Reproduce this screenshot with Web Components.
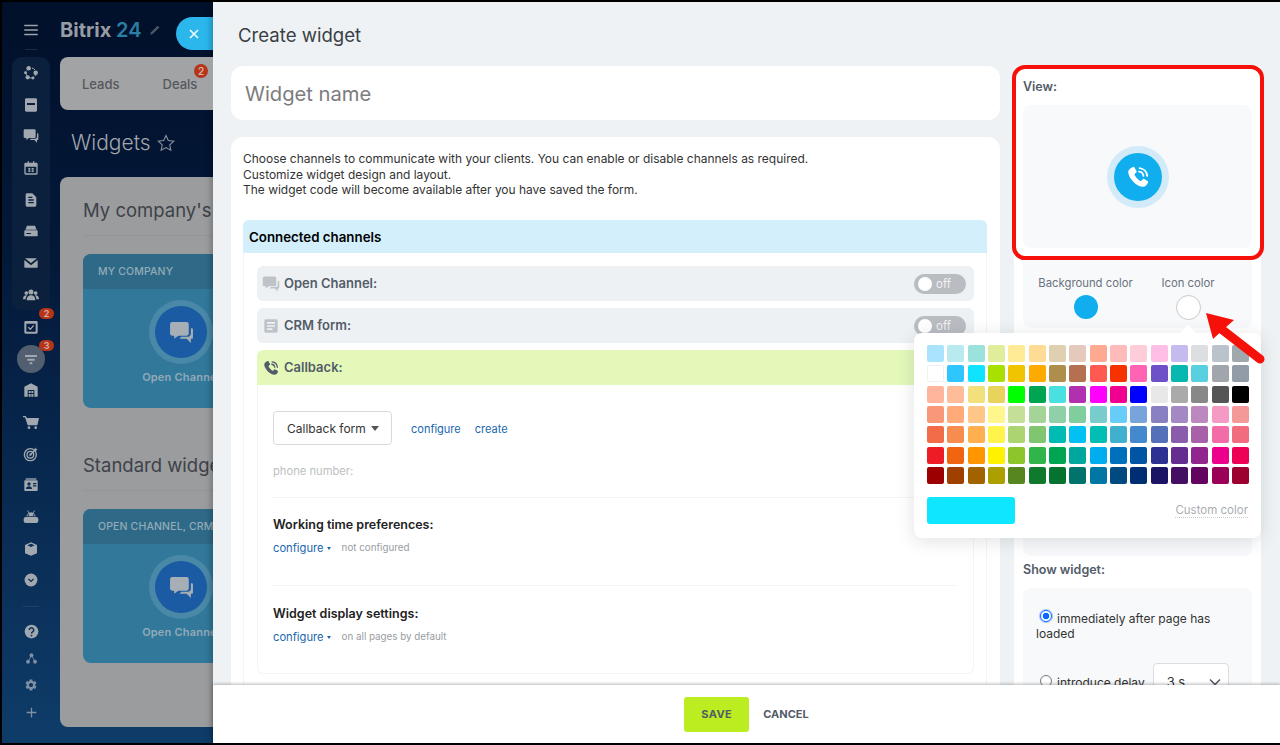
<!DOCTYPE html>
<html lang="en">
<head>
<meta charset="utf-8">
<title>Create widget</title>
<style>
    html, body { margin: 0; background: #000; }
    body { font-family: Inter, "Liberation Sans", sans-serif; }
</style>
</head>
<body>
<bx-app></bx-app>
<script>
const ICONS = {
    menu: '<path d="M3 5h18v2H3zM3 11h18v2H3zM3 17h18v2H3z"/>',
    sites: '<circle cx="12" cy="12" r="7.5" fill="none" stroke="currentColor" stroke-width="1.5" stroke-dasharray="5 4"/><circle cx="8.5" cy="5" r="3.4"/><circle cx="19" cy="11.5" r="3.4"/><circle cx="7" cy="18.5" r="3.2"/><circle cx="15" cy="19.5" r="2.2"/><circle cx="3.8" cy="11.5" r="2.2"/>',
    card: '<path fill-rule="evenodd" d="M5 2h14a2 2 0 0 1 2 2v16a2 2 0 0 1-2 2H5a2 2 0 0 1-2-2V4a2 2 0 0 1 2-2zm1 7v3h12V9z"/>',
    chat: '<path d="M3 2h14a2 2 0 0 1 2 2v9a2 2 0 0 1-2 2H9l-4 3v-3H3a2 2 0 0 1-2-2V4a2 2 0 0 1 2-2z"/><path d="M21 8h1a1 1 0 0 1 1 1v8a1 1 0 0 1-1 1h-1v4l-4-4h-7l2-2h6a3 3 0 0 0 3-3z"/>',
    calendar: '<path fill-rule="evenodd" d="M4 4h3V2h2v2h6V2h2v2h3a2 2 0 0 1 2 2v14a2 2 0 0 1-2 2H4a2 2 0 0 1-2-2V6a2 2 0 0 1 2-2zm0 6v10h16V10zm4 2h3v2.5H8zm5 0h3v2.5h-3zm-5 3.5h3V18H8zm5 0h3V18h-3z"/>',
    doc: '<path fill-rule="evenodd" d="M6 2h8l6 6v12a2 2 0 0 1-2 2H6a2 2 0 0 1-2-2V4a2 2 0 0 1 2-2zm2 5v2h6V7zm0 4v2h8v-2zm0 4v2h8v-2z"/>',
    form: '<path fill-rule="evenodd" d="M4 2h16a2 2 0 0 1 2 2v16a2 2 0 0 1-2 2H4a2 2 0 0 1-2-2V4a2 2 0 0 1 2-2zm2 4v2.500h12V6zm0 4.800v2.400h12v-2.400zm0 4.700V18h8v-2.500z"/>',
    drive: '<path fill-rule="evenodd" d="M6 4h12l2.5 6h-17zM3 11h18a1 1 0 0 1 1 1v7a1 1 0 0 1-1 1H3a1 1 0 0 1-1-1v-7a1 1 0 0 1 1-1zm2 4v1.6h7V15z"/>',
    mail: '<path d="M3 5h18l-9 7zM2 7.500l10 8 10-8V18a1 1 0 0 1-1 1H3a1 1 0 0 1-1-1z"/>',
    people: '<circle cx="12" cy="7.500" r="3.800"/><circle cx="5" cy="9" r="2.800"/><circle cx="19" cy="9" r="2.800"/><path d="M5.500 20c0-5 2.500-7.500 6.500-7.500s6.500 2.500 6.500 7.500zM0 18.500c0-4 1.800-6 5-6 .6 0 1 .1 1.400.3C4.500 14.300 4 16.500 4 18.500zM24 18.500c0-4-1.800-6-5-6-.6 0-1 .1-1.400.3 1.900 1.500 2.400 3.700 2.400 5.700z"/>',
    task: '<path fill-rule="evenodd" d="M4 3h16a2 2 0 0 1 2 2v15a2 2 0 0 1-2 2H4a2 2 0 0 1-2-2V5a2 2 0 0 1 2-2zm1 4v12h14V7z"/><path d="M8 12.500l3 3 5-6" fill="none" stroke="currentColor" stroke-width="2"/>',
    funnel: '<path d="M3 6h18v3H3zM6.500 11.500h11v3h-11zM10 17h4v3h-4z"/>',
    store: '<path fill-rule="evenodd" d="M12 2l10 5v15h-5V12H7v10H2V7z"/><path d="M8.500 13.500h3v3h-3zM12.500 13.500h3v3h-3zM8.500 18h3v4h-3zM12.500 18h3v4h-3z"/>',
    cart: '<path d="M0 3h4l2 3h18l-2.500 11H7L3 5H0z"/><circle cx="9" cy="20.500" r="2"/><circle cx="19" cy="20.500" r="2"/>',
    target: '<circle cx="11" cy="13" r="9" fill="none" stroke="currentColor" stroke-width="2"/><circle cx="11" cy="13" r="5" fill="none" stroke="currentColor" stroke-width="2"/><circle cx="11" cy="13" r="1.800"/><path d="M11 13L20 4" stroke="currentColor" stroke-width="2"/><path d="M18 2l1 2.500L22 5l-2.500 2.500L17 6z"/>',
    contact: '<path d="M4 2h16v2H4z"/><path fill-rule="evenodd" d="M3 5h18a1 1 0 0 1 1 1v14a1 1 0 0 1-1 1H3a1 1 0 0 1-1-1V6a1 1 0 0 1 1-1zm6 3a2.500 2.500 0 1 0 0 5 2.500 2.500 0 0 0 0-5zm-4.500 10h9c0-2.500-2-4-4.500-4s-4.500 1.500-4.500 4zM15 9v1.800h5V9zm0 3.500v1.800h5v-1.800z"/>',
    robot: '<path d="M7 2l2.500 3.500a7 7 0 0 1 5 0L17 2l.8.6-2.200 3.400A7 7 0 0 1 19 11H5a7 7 0 0 1 3.400-5L6.200 2.600z"/><path fill-rule="evenodd" d="M4 12h16a3 3 0 0 1 3 3v3a3 3 0 0 1-3 3H4a3 3 0 0 1-3-3v-3a3 3 0 0 1 3-3z"/><circle cx="8" cy="9" r="1.300" fill="var(--icon-cut, #0a2b4f)"/><circle cx="16" cy="9" r="1.300" fill="var(--icon-cut, #0a2b4f)"/>',
    cube: '<path fill-rule="evenodd" d="M12 2l9 4v12.500L12 22l-9-3.500V6zm0 2.200L6.500 6.500 12 9l5.500-2.500z"/>',
    chevron: '<circle cx="12" cy="12" r="11"/><path d="M7.500 10l4.500 4.500 4.500-4.500" fill="none" stroke="var(--icon-cut, #0a2b4f)" stroke-width="2.200"/>',
    question: '<circle cx="12" cy="12" r="11"/><path d="M8.500 9.500a3.500 3.500 0 1 1 5.300 3c-1.300.8-1.800 1.400-1.800 2.700" fill="none" stroke="var(--icon-cut, #0c3157)" stroke-width="2.400"/><circle cx="12" cy="18.500" r="1.500" fill="var(--icon-cut, #0c3157)"/>',
    nodes: '<circle cx="12" cy="6" r="3.500"/><circle cx="5.500" cy="18" r="3.500"/><circle cx="18.500" cy="18" r="3.500"/><path d="M12 6L5.500 18M12 6l6.500 12" stroke="currentColor" stroke-width="1.500"/>',
    gear: '<path d="M19.140 12.940c.04-.3.06-.61.06-.94 0-.32-.02-.64-.07-.94l2.030-1.580c.18-.14.23-.41.12-.61l-1.920-3.320c-.12-.22-.37-.29-.59-.22l-2.390.96c-.5-.38-1.030-.7-1.620-.94l-.36-2.540c-.04-.24-.24-.41-.48-.41h-3.840c-.24 0-.43.17-.47.41l-.36 2.540c-.59.24-1.130.57-1.620.94l-2.390-.96c-.22-.08-.47 0-.59.22L2.740 8.870c-.12.21-.08.47.12.61l2.030 1.580c-.05.3-.09.63-.09.94s.02.64.07.94l-2.030 1.580c-.18.14-.23.41-.12.61l1.920 3.320c.12.22.37.29.59.22l2.390-.96c.5.38 1.030.7 1.620.94l.36 2.540c.05.24.24.41.48.41h3.840c.24 0 .44-.17.47-.41l.36-2.540c.59-.24 1.130-.56 1.620-.94l2.390.96c.22.08.47 0 .59-.22l1.920-3.320c.12-.22.07-.47-.12-.61l-2.010-1.580zM12 15.600c-1.980 0-3.600-1.620-3.600-3.600s1.620-3.600 3.600-3.600 3.600 1.620 3.600 3.600-1.620 3.600-3.600 3.600z"/>',
    plus: '<path d="M10.800 3h2.400v7.800H21v2.400h-7.800V21h-2.400v-7.800H3v-2.400h7.800z"/>',
    pencil: '<path d="M16.500 4.500l3 3L8 19l-4 1 1-4z"/>',
    star: '<path fill="none" stroke="currentColor" stroke-width="1.300" d="M12 3l2.800 6 6.500.8-4.800 4.400 1.300 6.500L12 17.500l-5.800 3.200 1.300-6.500L2.700 9.800 9.200 9z"/>',
    close: '<path d="M6 6l12 12M18 6L6 18" fill="none" stroke="currentColor" stroke-width="2.600"/>',
    phone: '<path d="M7.200 2.800c.5-.3 1.100-.2 1.400.3l2 3.300c.3.5.2 1-.2 1.400L8.900 9.200c-.2.200-.3.500-.1.800.9 1.900 3.200 4.600 5.300 5.700.3.100.6.100.8-.1l1.500-1.500c.4-.4 1-.5 1.400-.2l3 1.900c.5.300.7.900.4 1.400-.8 1.600-2.200 3.800-4.600 3.800C10.900 21 3.600 13.400 3 8 2.700 5.600 5.300 3.800 7.200 2.800z"/><path d="M13 7a4.500 4.500 0 0 1 4 4M13.500 3.800a8 8 0 0 1 7 7.200" fill="none" stroke="currentColor" stroke-width="1.700" stroke-linecap="round"/>'
};

class BxIcon extends HTMLElement {
    connectedCallback() {
        const size = this.getAttribute('size') || 16;
        this.attachShadow({ mode: 'open' }).innerHTML = `
            <style>:host { display: inline-flex; flex: none; } svg { display: block; fill: currentColor; }</style>
            <svg width="${size}" height="${size}" viewBox="0 0 24 24">${ICONS[this.getAttribute('name')]}</svg>`;
    }
}

class BxNavItem extends HTMLElement {
    connectedCallback() {
        const badge = this.getAttribute('badge');
        this.attachShadow({ mode: 'open' }).innerHTML = `
            <style>
                :host { display: flex; position: relative; height: 31.7px; align-items: center; justify-content: center; color: #a2a8b0; }
                :host([short]) { height: 27px; }
                :host([dim]) { color: #7f90a4; }
                :host([active]) .disc { background: #525f70; }
                .disc { width: 28px; height: 28px; border-radius: 50%; display: flex; align-items: center; justify-content: center; }
                .badge { position: absolute; left: 27px; top: -3px; width: 15px; height: 11px; border-radius: 6px; background: #b5341a; color: #d9b3a9; font: 600 9px/11px Inter, sans-serif; text-align: center; }
            </style>
            <div class="disc"><bx-icon name="${this.getAttribute('icon')}" size="${this.getAttribute('size') || 16}"></bx-icon></div>
            ${badge ? `<span class="badge">${badge}</span>` : ''}`;
    }
}

class BxSidebar extends HTMLElement {
    connectedCallback() {
        this.attachShadow({ mode: 'open' }).innerHTML = `
            <style>
                :host { display: block; width: 58px; flex: none; }
                .burger { height: 55px; display: flex; flex-direction: column; align-items: center; color: #9ea3aa; }
                .burger bx-icon { margin-top: 19px; }
                .burger i { display: block; width: 12px; height: 1px; margin-top: 10px; background: #1a2b44; }
                .rail { width: 38px; height: 253px; margin: 0 10px 1px; border-radius: 10px; background: #0b203c; }
                .rest { margin: 0 10px; width: 38px; }
                hr { width: 16px; height: 1px; border: 0; margin: 10px auto 10.5px; background: #1c4268; }
            </style>
            <div class="burger"><bx-icon name="menu" size="18"></bx-icon><i></i></div>
            <div class="rail">
                <bx-nav-item icon="sites"></bx-nav-item>
                <bx-nav-item icon="card"></bx-nav-item>
                <bx-nav-item icon="chat"></bx-nav-item>
                <bx-nav-item icon="calendar"></bx-nav-item>
                <bx-nav-item icon="doc"></bx-nav-item>
                <bx-nav-item icon="drive"></bx-nav-item>
                <bx-nav-item icon="mail"></bx-nav-item>
                <bx-nav-item icon="people"></bx-nav-item>
            </div>
            <div class="rest">
                <bx-nav-item icon="task" badge="2"></bx-nav-item>
                <bx-nav-item icon="funnel" badge="3" active></bx-nav-item>
                <bx-nav-item icon="store"></bx-nav-item>
                <bx-nav-item icon="cart"></bx-nav-item>
                <bx-nav-item icon="target"></bx-nav-item>
                <bx-nav-item icon="contact"></bx-nav-item>
                <bx-nav-item icon="robot"></bx-nav-item>
                <bx-nav-item icon="cube"></bx-nav-item>
                <bx-nav-item icon="chevron" size="14"></bx-nav-item>
                <hr>
                <bx-nav-item icon="question" size="15" short></bx-nav-item>
                <bx-nav-item icon="nodes" size="13" short dim></bx-nav-item>
                <bx-nav-item icon="gear" size="14" short dim></bx-nav-item>
                <bx-nav-item icon="plus" size="13" short dim></bx-nav-item>
            </div>`;
    }
}

class BxChannelTile extends HTMLElement {
    connectedCallback() {
        this.attachShadow({ mode: 'open' }).innerHTML = `
            <style>
                :host { display: block; width: 196px; height: 154px; border-radius: 8px; overflow: hidden; background: #31789b; }
                .head { height: 35px; padding-left: 15px; background: #2e6a87; color: #93aab7; font: 500 10.5px/36px Inter, sans-serif; letter-spacing: .15px; white-space: nowrap; }
                .disc { width: 52px; height: 52px; margin: 17px auto 0; border-radius: 50%; background: #1a5ba3; box-shadow: 0 0 0 6px #4a88a7; display: flex; align-items: center; justify-content: center; color: #a6aeb6; }
                .name { margin-top: 12px; text-align: center; color: #93aab7; font: 600 11px/14px Inter, sans-serif; letter-spacing: .2px; white-space: nowrap; }
            </style>
            <div class="head"><slot></slot></div>
            <div class="disc"><bx-icon name="chat" size="25"></bx-icon></div>
            <div class="name">Open Channel</div>`;
    }
}

class BxBackdrop extends HTMLElement {
    connectedCallback() {
        this.attachShadow({ mode: 'open' }).innerHTML = `
            <style>
                :host { display: flex; width: 211px; flex: none; overflow: hidden; background: linear-gradient(180deg, #01102a 0%, #03193a 35%, #0e3c69 100%); }
                .page { flex: 1; min-width: 0; white-space: nowrap; }
                .top { height: 55px; display: flex; align-items: center; }
                .logo { font: 700 20px/24px Inter, sans-serif; color: #989da4; }
                .logo b { color: #2a7da3; font-weight: 600; }
                .pen { margin-left: 6px; color: #4c5663; }
                .back { margin-left: auto; align-self: flex-end; margin-bottom: 7px; width: 37px; height: 33px; border-radius: 17px 0 0 17px; background: #2bb6ec; color: #eef9fe; display: flex; align-items: center; padding-left: 10px; box-sizing: border-box; }
                .tabs { height: 53px; border-radius: 8px 0 0 8px; background: #a2a3a5; display: flex; align-items: center; box-sizing: border-box; color: #55585e; font: 500 13px/16px Inter, sans-serif; position: relative; }
                .tabs span { margin-left: 22px; }
                .tabs span + span { margin-left: 43px; }
                .tabs i { position: absolute; left: 134px; top: 7px; width: 14px; height: 14px; border-radius: 50%; background: #b5341a; color: #d9b3a9; font: 600 10px/14px Inter, sans-serif; text-align: center; }
                .title { height: 67px; padding: 0 0 2px 11px; box-sizing: border-box; display: flex; align-items: center; gap: 5px; color: #a2a7ad; font: 300 21px/28px Inter, sans-serif; }
                .title bx-icon { color: #8d929a; }
                .sheet { height: 550px; border-radius: 8px 0 0 8px; background: #9b9c9e; padding: 21px 0 0 23px; box-sizing: border-box; }
                h2 { margin: 0; color: #3e4249; font: 400 18.5px/24px Inter, sans-serif; }
                hr { height: 1px; margin: 13px 0 18px; border: 0; background: #949597; }
                h2.second { margin-top: 45px; }
            </style>
            <bx-sidebar></bx-sidebar>
            <div class="page">
                <div class="top">
                    <span class="logo">Bitrix <b>24</b></span>
                    <bx-icon class="pen" name="pencil" size="14"></bx-icon>
                    <div class="back"><bx-icon name="close" size="16"></bx-icon></div>
                </div>
                <div class="tabs"><span>Leads</span><span>Deals</span><i>2</i></div>
                <div class="title">Widgets <bx-icon name="star" size="20"></bx-icon></div>
                <div class="sheet">
                    <h2>My company's</h2>
                    <hr>
                    <bx-channel-tile>MY COMPANY</bx-channel-tile>
                    <h2 class="second">Standard widgets</h2>
                    <hr>
                    <bx-channel-tile>OPEN CHANNEL, CRM</bx-channel-tile>
                </div>
            </div>`;
    }
}

class BxToggle extends HTMLElement {
    connectedCallback() {
        this.attachShadow({ mode: 'open' }).innerHTML = `
            <style>
                :host { display: flex; align-items: center; width: 52px; height: 20px; border-radius: 10px; background: #b9bcc1; box-sizing: border-box; padding-left: 4px; color: #f1f2f3; font: 400 11.5px/20px Inter, sans-serif; }
                i { width: 14px; height: 14px; border-radius: 50%; background: #fff; margin-right: 4px; }
            </style>
            <i></i>off`;
    }
}

class BxChannelRow extends HTMLElement {
    connectedCallback() {
        this.attachShadow({ mode: 'open' }).innerHTML = `
            <style>
                :host { display: flex; align-items: center; height: 35px; padding: 0 8px 0 5px; border-radius: 6px; background: #eef1f4; color: #535c69; font: 600 13px/15px Inter, sans-serif; }
                :host([open]) { background: #e3f8b9; border-radius: 6px 6px 0 0; }
                bx-icon { width: 18px; margin-right: 4px; color: #bfc3c8; justify-content: center; }
                :host([open]) bx-icon { color: #535c69; }
                bx-toggle { margin-left: auto; }
            </style>
            <bx-icon name="${this.getAttribute('icon')}" size="${this.getAttribute('icon-size') || 18}"></bx-icon>
            <slot></slot>
            ${this.hasAttribute('open') ? '' : '<bx-toggle></bx-toggle>'}`;
    }
}

class BxSetting extends HTMLElement {
    connectedCallback() {
        this.attachShadow({ mode: 'open' }).innerHTML = `
            <style>
                :host { display: block; }
                .name { color: #222; font: 600 12.5px/16px Inter, sans-serif; }
                .row { display: flex; align-items: center; margin-top: 8px; height: 14px; }
                a { color: #2067b0; font: 400 11.2px/14px Inter, sans-serif; }
                a::after { content: ""; display: inline-block; margin: 0 0 2px 3px; border: 2.5px solid transparent; border-top: 3px solid #2067b0; border-bottom: 0; }
                span { margin-left: 11px; color: #999ca1; font: 400 9.8px/14px Inter, sans-serif; }
            </style>
            <div class="name"><slot></slot></div>
            <div class="row"><a>configure</a><span>${this.getAttribute('note')}</span></div>`;
    }
}

class BxCallbackBody extends HTMLElement {
    connectedCallback() {
        this.attachShadow({ mode: 'open' }).innerHTML = `
            <style>
                :host { display: block; height: 289px; box-sizing: border-box; padding: 26px 16px 0 15px; border: 1px solid #f3f4f5; border-top: 0; border-radius: 0 0 6px 6px; }
                .form { display: flex; align-items: center; gap: 19px; }
                .pick { display: flex; align-items: center; width: 119px; height: 34px; box-sizing: border-box; padding: 1px 0 0 13px; border: 1px solid #d9dadc; border-radius: 4px; color: #333; font: 400 12px/16px Inter, sans-serif; }
                .pick::after { content: ""; margin-left: 5px; border: 4px solid transparent; border-top: 5px solid #555; border-bottom: 0; }
                a { color: #2067b0; font: 400 11px/14px Inter, sans-serif; padding-top: 1px; }
                .form a + a { margin-left: -5px; }
                .phone { margin-top: 19px; color: #bcbfc2; font: 400 11.2px/14px Inter, sans-serif; }
                hr { height: 1px; border: 0; background: #f2f3f4; margin: 0; }
                .one { margin-top: 19px; margin-bottom: 19px; }
                .two { margin: 30px 0 20px -2px; }
            </style>
            <div class="form"><div class="pick">Callback form</div><a>configure</a><a>create</a></div>
            <div class="phone">phone number:</div>
            <hr class="one">
            <bx-setting note="not configured">Working time preferences:</bx-setting>
            <hr class="two">
            <bx-setting note="on all pages by default">Widget display settings:</bx-setting>`;
    }
}

class BxChannelsCard extends HTMLElement {
    connectedCallback() {
        this.attachShadow({ mode: 'open' }).innerHTML = `
            <style>
                :host { display: block; border-radius: 12px 12px 0 0; background: #fff; padding: 14px 13px 0 12px; height: 560px; box-sizing: border-box; }
                p { margin: 0; color: #333; font: 400 11.97px/15.5px Inter, sans-serif; }
                h3 { margin: 22.5px 0 0; height: 33px; padding-left: 6px; border-radius: 6px 6px 0 0; background: #d2effb; color: #000; font: 600 13.3px/35px Inter, sans-serif; }
                .list { border: 1px solid #f3f4f5; border-top: 0; padding: 13px 12px 20px 13px; display: flex; flex-direction: column; }
                bx-channel-row { margin-bottom: 7px; }
                bx-channel-row[open] { margin-bottom: 0; }
            </style>
            <p>Choose channels to communicate with your clients. You can enable or disable channels as required.<br>Customize widget design and layout.<br>The widget code will become available after you have saved the form.</p>
            <h3>Connected channels</h3>
            <div class="list">
                <bx-channel-row icon="chat">Open Channel:</bx-channel-row>
                <bx-channel-row icon="form" icon-size="16">CRM form:</bx-channel-row>
                <bx-channel-row icon="phone" open>Callback:</bx-channel-row>
                <bx-callback-body></bx-callback-body>
            </div>`;
    }
}

class BxWidgetButton extends HTMLElement {
    connectedCallback() {
        this.attachShadow({ mode: 'open' }).innerHTML = `
            <style>
                :host { display: flex; align-items: center; justify-content: center; width: 48px; height: 48px; border-radius: 50%; background: #10aeef; box-shadow: 0 0 0 7px #d3ebf9; color: #fff; }
            </style>
            <bx-icon name="phone" size="26"></bx-icon>`;
    }
}

class BxViewColumn extends HTMLElement {
    connectedCallback() {
        this.attachShadow({ mode: 'open' }).innerHTML = `
            <style>
                :host { display: block; width: 247px; flex: none; box-sizing: border-box; padding: 0 9px; background: #fff; height: 700px; }
                h4 { margin: 0; padding-top: 13px; height: 39px; box-sizing: border-box; color: #535c69; font: 600 12.5px/16px Inter, sans-serif; }
                .box { border-radius: 8px; background: #f8f9fb; }
                .preview { height: 143px; display: flex; align-items: center; justify-content: center; }
                .colors { height: 72px; margin-top: 8px; display: grid; grid-template-columns: 125px 80px; text-align: center; color: #6a727d; font: 400 11.3px/15px Inter, sans-serif; padding-top: 20px; box-sizing: border-box; white-space: nowrap; }
                .colors i { display: block; width: 24px; height: 24px; margin: 4px auto 0; border-radius: 50%; background: #10aeef; box-sizing: border-box; }
                .colors div + div i { background: #fff; border: 1px solid #c9c9c9; width: 25px; height: 25px; }
                .spare { height: 220px; margin-top: 8px; }
                h4.show { padding-top: 6px; height: 32px; }
                .delay { padding: 22px 13px 0; color: #333; font: 400 12px/15px Inter, sans-serif; height: 150px; box-sizing: border-box; }
                .radio { display: inline-block; width: 10px; height: 10px; margin: 0 5px 0 4px; border-radius: 50%; border: 1px solid #777; background: #fff; vertical-align: 1px; }
                .radio.on { border-color: #0a6cff; background: radial-gradient(circle, #0a6cff 0 3px, #fff 3.6px); box-shadow: 0 0 0 1px #9cc4ff; }
                .line2 { display: flex; align-items: center; margin-top: 22px; }
                .line2 .radio { vertical-align: 0; position: relative; top: -1px; }
                .select { width: 76px; height: 38px; margin-left: 8px; box-sizing: border-box; padding: 0 7px 0 13px; display: flex; align-items: center; justify-content: space-between; border: 1px solid #dcdde0; border-radius: 4px; background: #fff; font-size: 13px; }
                .select svg { display: block; }
            </style>
            <h4>View:</h4>
            <div class="box preview"><bx-widget-button></bx-widget-button></div>
            <div class="box colors">
                <div>Background color<i></i></div>
                <div>Icon color<i></i></div>
            </div>
            <div class="box spare"></div>
            <h4 class="show">Show widget:</h4>
            <div class="box delay">
                <div><span class="radio on"></span>immediately after page has loaded</div>
                <div class="line2"><span class="radio"></span>introduce delay<div class="select">3 s<svg width="12" height="8" viewBox="0 0 12 8"><path d="M1 1.500l5 5 5-5" fill="none" stroke="#535c69" stroke-width="1.600"/></svg></div></div>
            </div>`;
    }
}

const SWATCHES = [
    '#a9e4fc #b9eaf0 #9ce2dc #e0ee9c #ffeb96 #ffdc96 #ded0b0 #e4c9bc #ffa990 #ffbaba #ffccda #ffbee6 #c6baee #dcdee2 #bac2cc #a0a8ae',
    '#ffffff #2fc6ff #0ee4ff #a8e000 #f0c400 #ffaa00 #ae8e4c #b47050 #ff5a52 #f53200 #ff64b4 #6e50c8 #08b8b0 #58d0e0 #a0a6ac #929ca8',
    '#ffb49c #ffbc98 #f2e07c #e8d45c #00ff00 #00a552 #48e0e0 #b030b0 #ff00ff #f00090 #0000ff #e8e8e8 #aaaaaa #888888 #555555 #000000',
    '#f89878 #ffaa78 #ffc688 #fff68c #c4e098 #a4d498 #90d0a8 #80ce9e #78cccc #68ccf8 #78a4dc #8880c0 #a488c4 #bc88c0 #f49ac4 #f49898',
    '#f26c48 #f78c50 #ffae50 #fff44c #acd470 #80c670 #00bab4 #00c0f4 #00beb4 #40b0ce #4488ce #5470b8 #8a5cac #a860a8 #f26ca8 #f26c80',
    '#ee1c24 #f26510 #ff9600 #fff200 #8dc62a #31b44a #00a551 #00a79c #00aeef #0070bc #0054a4 #2e3092 #662d91 #91278e #ec008c #ed0056',
    '#9c0000 #a04000 #a36200 #aba000 #578520 #0f7a2c #067230 #00746c #0076a4 #004a80 #002e72 #1b1464 #440e62 #630460 #9b0058 #9b0030'
];

class BxColorPopup extends HTMLElement {
    connectedCallback() {
        const cells = SWATCHES.join(' ').split(' ').map(c =>
            `<i style="background:${c}${c === '#ffffff' ? ';box-shadow:inset 0 0 0 1px #f0f0f0' : ''}"></i>`).join('');
        this.attachShadow({ mode: 'open' }).innerHTML = `
            <style>
                :host { position: absolute; left: 912px; top: 331px; width: 347px; height: 205px; box-sizing: border-box; padding: 12px 13px; background: #fff; border-radius: 8px; box-shadow: 0 3px 18px rgba(60, 70, 80, .16); }
                :host::before { content: ""; position: absolute; left: 266px; top: -8px; border: 8px solid transparent; border-top: 0; border-bottom-color: #fff; }
                .grid { display: grid; grid-template-columns: repeat(16, 17px); grid-auto-rows: 17px; gap: 3.33px; }
                i { display: block; border-radius: 2px; }
                .foot { display: flex; align-items: center; justify-content: space-between; margin-top: 13px; }
                .now { width: 88px; height: 27px; border-radius: 3px; background: #0fe6ff; }
                span { color: #a9adb2; font: 400 11.5px/14px Inter, sans-serif; border-bottom: 1px dotted #ccc; }
            </style>
            <div class="grid">${cells}</div>
            <div class="foot"><div class="now"></div><span>Custom color</span></div>`;
    }
}

class BxPanel extends HTMLElement {
    connectedCallback() {
        this.attachShadow({ mode: 'open' }).innerHTML = `
            <style>
                :host { flex: 1; min-width: 0; display: flex; flex-direction: column; background: #eef2f4; box-shadow: -2px 0 6px rgba(0,0,0,.25); }
                h1 { margin: 0; height: 64px; box-sizing: border-box; padding: 21px 0 0 25px; color: #3a3f46; font: 400 18.6px/24px Inter, sans-serif; flex: none; }
                .body { flex: 1; min-height: 0; overflow: hidden; display: flex; gap: 14px; padding-left: 18px; }
                .left { width: 769px; flex: none; }
                .name { height: 54px; border-radius: 12px; background: #fff; margin-bottom: 17px; padding-left: 14px; color: #7b7c7e; font: 400 20.2px/55px Inter, sans-serif; }
                .foot { flex: none; height: 58px; position: relative; background: #fff; box-shadow: 0 -1px 3px rgba(0,0,0,.28); display: flex; align-items: center; justify-content: center; font: 700 11px/14px Inter, sans-serif; color: #535c69; }
                .save { width: 65px; height: 35px; border-radius: 3px; background: #bbed21; text-align: center; line-height: 35px; margin-right: 14px; letter-spacing: .4px; }
            </style>
            <h1>Create widget</h1>
            <div class="body">
                <div class="left">
                    <div class="name">Widget name</div>
                    <bx-channels-card></bx-channels-card>
                </div>
                <bx-view-column></bx-view-column>
            </div>
            <div class="foot"><div class="save">SAVE</div><div>CANCEL</div></div>`;
    }
}

class BxApp extends HTMLElement {
    connectedCallback() {
        this.attachShadow({ mode: 'open' }).innerHTML = `
            <style>
                :host { display: flex; position: relative; width: 1280px; height: 745px; box-sizing: border-box; border: solid #000; border-width: 2px 0 2px 2px; overflow: hidden; font-family: Inter, "Liberation Sans", sans-serif; }
                .mark { position: absolute; left: 1010px; top: 63px; width: 252px; height: 195px; box-sizing: border-box; border: 4px solid #f5100a; border-radius: 13px; }
                svg { position: absolute; left: 1188px; top: 288px; }
            </style>
            <bx-backdrop></bx-backdrop>
            <bx-panel></bx-panel>
            <div class="mark"></div>
            <bx-color-popup></bx-color-popup>
            <svg width="90" height="90" viewBox="0 0 90 90">
                <path d="M16 23 L44 30 L35 38 L23 49 Z" fill="#f5100a"/>
                <path d="M30 38 L70 69" stroke="#f5100a" stroke-width="9" stroke-linecap="round"/>
            </svg>`;
    }
}

customElements.define('bx-icon', BxIcon);
customElements.define('bx-nav-item', BxNavItem);
customElements.define('bx-sidebar', BxSidebar);
customElements.define('bx-channel-tile', BxChannelTile);
customElements.define('bx-backdrop', BxBackdrop);
customElements.define('bx-toggle', BxToggle);
customElements.define('bx-channel-row', BxChannelRow);
customElements.define('bx-setting', BxSetting);
customElements.define('bx-callback-body', BxCallbackBody);
customElements.define('bx-channels-card', BxChannelsCard);
customElements.define('bx-widget-button', BxWidgetButton);
customElements.define('bx-view-column', BxViewColumn);
customElements.define('bx-color-popup', BxColorPopup);
customElements.define('bx-panel', BxPanel);
customElements.define('bx-app', BxApp);
</script>
</body>
</html>
